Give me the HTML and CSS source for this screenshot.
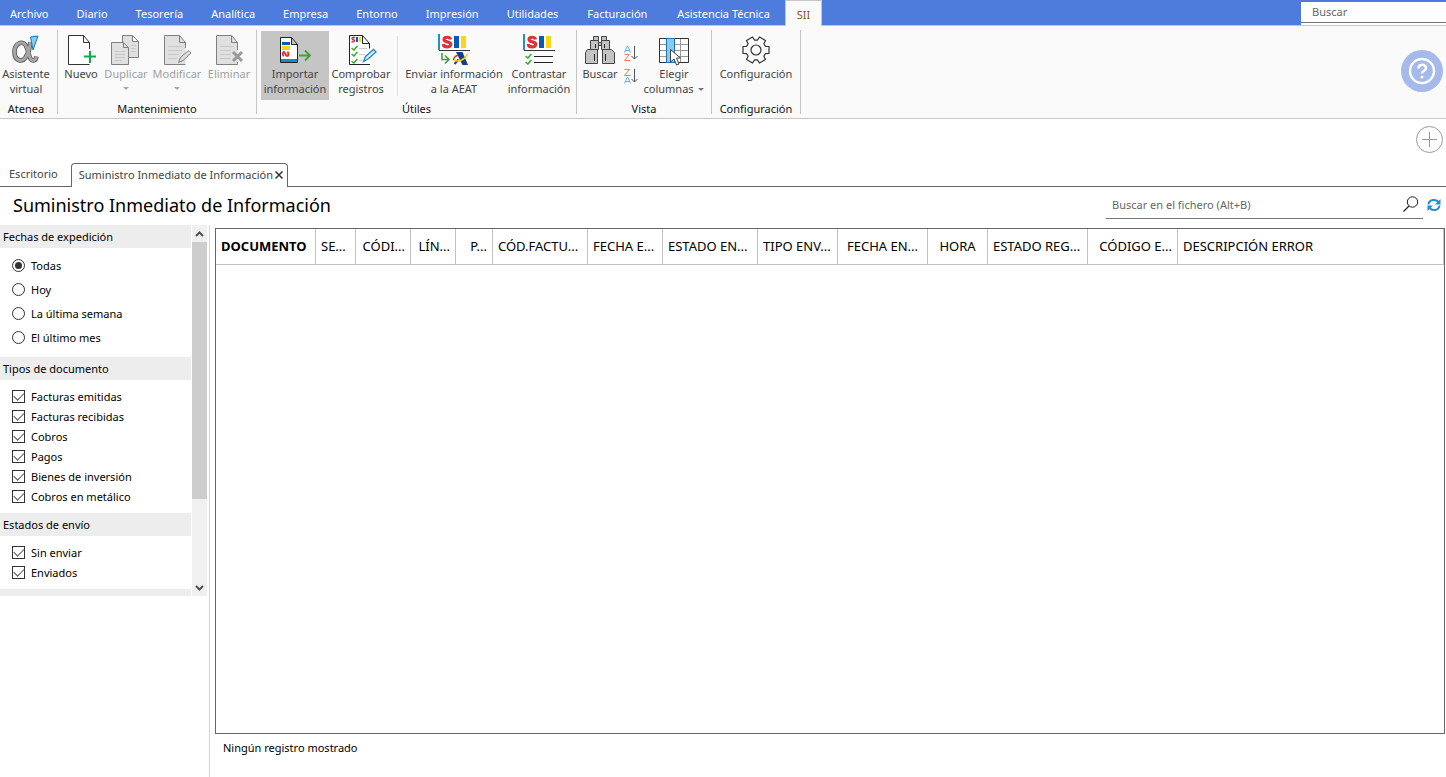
FILE: index.html
```html
<!DOCTYPE html>
<html lang="es">
<head>
<meta charset="utf-8">
<title>Suministro Inmediato de Información</title>
<link rel="stylesheet" href="styles.css">
</head>
<body>
<svg class="defs" aria-hidden="true">
  <symbol id="page" viewBox="0 0 32 32">
    <path d="M24.500 18V8.500l-6-7h-15v29h21M18.500 1.500v7h6" fill="#fff" stroke="#333"/>
  </symbol>
  <symbol id="sii" viewBox="0 0 32 17">
    <path d="M0 0h32v16H0z" fill="#fff"/><path d="M0 0h2v16H0z" fill="#2a8dcb"/>
    <path d="M12.500 5.500C12 2.500 6 2.500 6 5.500c0 3.200 6.800 1.500 6.800 5 0 3.200-7.300 3.200-7.600-.5" fill="none" stroke="#e0303a" stroke-width="3.200"/>
    <path d="M16 2h5v12h-5z" fill="#0a5ab0"/><path d="M23 2h5v12h-5z" fill="#ffd412"/>
    <path d="M1 16.500h31" stroke="#333"/>
  </symbol>
  <symbol id="check" viewBox="0 0 6 5">
    <path d="M.5 2.500l2 1.700L5.500.7" fill="none" stroke="#3ea535" stroke-width="1.300"/>
  </symbol>
</svg>

<header class="menubar">
  <nav class="menu">
    <button>Archivo</button><button>Diario</button><button>Tesorería</button><button>Analítica</button><button>Empresa</button><button>Entorno</button><button>Impresión</button><button>Utilidades</button><button>Facturación</button><button>Asistencia Técnica</button><button class="current">SII</button>
  </nav>
  <div class="menu-search">
    <input type="text" placeholder="Buscar" aria-label="Buscar">
  </div>
</header>

<div class="ribbon">
  <section class="group g-atenea">
    <div class="tools">
      <button class="tool">
        <svg viewBox="0 0 32 32"><g fill="none"><path d="M20.500 8c-1 9-3.500 13.500-5 15.500C12 28.500 4.500 27 4.500 18S12.500 6.500 15.500 11c3 4.500 3.500 15.500 7.500 15.500 2 0 3-1.500 3.500-4" stroke="#555" stroke-width="4.600"/><path d="M20.500 8c-1 9-3.500 13.500-5 15.500C12 28.500 4.500 27 4.500 18S12.500 6.500 15.500 11c3 4.500 3.500 15.500 7.500 15.500 2 0 3-1.500 3.500-4" stroke="#a6a6a6" stroke-width="3"/></g><path d="M20.500 3l7.500-1-5 14z" fill="#8ccbf0" stroke="#1b75b5"/></svg>
        <span>Asistente<br>virtual</span>
      </button>
    </div>
    <h2>Atenea</h2>
  </section>

  <section class="group g-mant">
    <div class="tools">
      <button class="tool w42">
        <svg viewBox="0 0 32 32"><use href="#page"/><path d="M25 15v14M18 22.500h14" stroke="#fafafa" stroke-width="5"/><path d="M25 17v12M19 22.500h12" stroke="#10a84c" stroke-width="2"/></svg>
        <span>Nuevo</span>
      </button>
      <button class="tool w48" disabled>
        <svg viewBox="0 0 32 32"><g fill="#e0e0e0" stroke="#808080"><path d="M12.500 1.500h10l6 6v16h-16zM22.500 1.500v6h6"/><path d="M1.500 8.500h12l5 5v17h-17zM13.500 8.500v5h5"/></g><path d="M5 17.500h10M5 20.500h10M5 23.500h10M5 26.500h7M21 11.500h5M21 14.500h5M21 17.500h5" stroke="#c8c8c8"/></svg>
        <span>Duplicar</span><i class="arrow"></i>
      </button>
      <button class="tool w54" disabled>
        <svg viewBox="0 0 32 32"><path d="M24.500 14V8.500l-6-7h-15v29h21M18.500 1.500v7h6" fill="#e0e0e0" stroke="#808080"/><path d="M7 12.500h14M7 16.500h14M7 20.500h11M7 24.500h9" stroke="#c8c8c8"/><path d="M17.500 28.500l2-5 8-7 2.500 2.500-8 7.500z" fill="#ddd" stroke="#808080"/></svg>
        <span>Modificar</span><i class="arrow"></i>
      </button>
      <button class="tool w50" disabled>
        <svg viewBox="0 0 32 32"><path d="M24.500 16V8.500l-6-7h-15v29h21V28M18.500 1.500v7h6" fill="#e0e0e0" stroke="#808080"/><path d="M7 12.500h14M7 16.500h11M7 20.500h11M7 24.500h11" stroke="#c8c8c8"/><path d="M20 18l9 9M29 18l-9 9" stroke="#999" stroke-width="3"/></svg>
        <span>Eliminar</span>
      </button>
    </div>
    <h2>Mantenimiento</h2>
  </section>

  <section class="group g-utiles">
    <div class="tools">
      <button class="tool w68 active">
        <svg viewBox="0 0 32 32"><path d="M1.500 3.500h11l6 7v18h-17zM12.500 3.500v7h6" fill="#fff" stroke="#222"/><path d="M2 25h16v3H2z" fill="#1d86c4"/><path d="M3 8h8v3H3z" fill="#0a5ab0"/><path d="M3 12h8v4H3z" fill="#ffd412"/><path d="M5 22c-1.700-1-1.500-4 0-4s1.300 4 3 4 2.200-3 .3-4" fill="none" stroke="#e0303a" stroke-width="2"/><path d="M20 21.500h11M26 16.500l5 5-5 5" fill="none" stroke="#3ea535" stroke-width="1.800"/></svg>
        <span>Importar<br>información</span>
      </button>
      <button class="tool w64">
        <svg viewBox="0 0 32 32"><path d="M25 30.500H4.500v-29h13l7 8v5M17.500 1.500v8h7" fill="#fff" stroke="#222"/><path d="M10 3.700c-2-.9-3.500.1-2.700 1.300s2.700 1 2.200 2-2 1-3 .5" fill="none" stroke="#e0303a" stroke-width="1.500"/><path d="M11 3h2v5h-2z" fill="#0a5ab0"/><path d="M14 3h2v5h-2z" fill="#ffd412"/><use href="#check" x="6" y="11" width="7" height="6"/><use href="#check" x="6" y="17" width="7" height="6"/><use href="#check" x="6" y="24" width="7" height="6"/><path d="M14 14.500h8M14 20.500h6M14 26.500h3" stroke="#ccc"/><path d="M18.500 27.500l2-5 8-7 2.500 2.500-8 7z" fill="#d6edfa" stroke="#2788c5" stroke-width="1.300"/></svg>
        <span>Comprobar<br>registros</span>
      </button>
      <div class="divider"></div>
      <button class="tool w104">
        <svg viewBox="0 0 32 32"><use href="#sii" width="32" height="17"/><path d="M4 19v6.500h6M7 21.500l4 4-4 4" fill="none" stroke="#3ea535" stroke-width="1.600"/><path d="M18 18h6.500L30 31h-5.500z" fill="#163c8c"/><path d="M16.500 30l4-4.500" stroke="#163c8c" stroke-width="2"/><path d="M20 21c-4 2-5 4-4 5" fill="none" stroke="#e0303a" stroke-width="1.500"/><path d="M16 26c4 2.500 11 0 13.500-6" fill="none" stroke="#ffc90e" stroke-width="1.600"/></svg>
        <span>Enviar información<br>a la AEAT</span>
      </button>
      <button class="tool w66">
        <svg viewBox="0 0 32 32"><use href="#sii" width="32" height="17"/><use href="#check" x="2" y="19" width="7" height="6"/><use href="#check" x="2" y="25" width="7" height="6"/><path d="M11 22.500h19M11 28.500h19" stroke="#222"/></svg>
        <span>Contrastar<br>información</span>
      </button>
    </div>
    <h2>Útiles</h2>
  </section>

  <section class="group g-vista">
    <div class="tools">
      <button class="tool w38">
        <svg viewBox="0 0 32 32"><g fill="#c4c4c4" stroke="#444"><path d="M9.500 2.500h5v4h-5zM17.500 2.500h5v4h-5z"/><path d="M14 8.500h4v3h-4z"/><path d="M6.500 6.500h8v9h-8zM17.500 6.500h8v9h-8z"/><path d="M1.500 29.500v-11l2-3h10v14zM18.500 29.500v-14h9l3 3v11z"/></g><path d="M11.500 10v4M20.500 10v4M10.500 20v7M21.500 20v7" stroke="#222"/></svg>
        <span>Buscar</span>
      </button>
      <div class="sorts">
        <button aria-label="Orden ascendente"><svg viewBox="0 0 16 17"><path d="M1.500 7.500l2.500-6h1l2.500 6M2.500 5.500h4" fill="none" stroke="#62afdd"/><path d="M1.500 9.500h5l-5 6h6" fill="none" stroke="#ee7478"/><path d="M11.500 1v13M8.500 11l3 3 3-3" fill="none" stroke="#555"/></svg></button>
        <button aria-label="Orden descendente"><svg viewBox="0 0 16 17"><path d="M1.500 1.500h5l-5 6h6" fill="none" stroke="#ee7478"/><path d="M1.500 15.500l2.500-6h1l2.500 6M2.500 13.500h4" fill="none" stroke="#62afdd"/><path d="M11.500 1v13M8.500 11l3 3 3-3" fill="none" stroke="#555"/></svg></button>
      </div>
      <button class="tool w66">
        <svg viewBox="0 0 32 32"><path d="M1.500 4.500h29v24h-29z" fill="#fff"/><path d="M22.500 4v25M1 10.500h30M1 16.500h30M1 22.500h30" stroke="#999"/><path d="M1.500 4.500h29v24h-29z" fill="none" stroke="#333"/><path d="M8.500 4.500h8v24h-8z" fill="#8cc9f2" stroke="#1b75b5"/><path d="M12.500 15.500v12.500l3.500-3 2.500 6 2.500-1-2.500-6h4z" fill="#fff" stroke="#444"/></svg>
        <span>Elegir<br>columnas <i class="arrow inline"></i></span>
      </button>
    </div>
    <h2>Vista</h2>
  </section>

  <section class="group g-config">
    <div class="tools">
      <button class="tool">
        <svg viewBox="0 0 32 32"><g fill="none" stroke="#333" stroke-width="1.200" stroke-linejoin="round"><path d="M25.300 12.300L29 12.500v7l-3.700.2-1.400 2.500 1.600 3.300-6 3.500-2.100-3.100h-2.800L12.500 29l-6-3.500 1.600-3.300-1.400-2.500-3.700-.2v-7l3.700-.2 1.400-2.500-1.600-3.300 6-3.500 2.100 3.100h2.800L19.500 3l6 3.500-1.600 3.300z"/><circle cx="16" cy="16" r="5"/></g></svg>
        <span>Configuración</span>
      </button>
    </div>
    <h2>Configuración</h2>
  </section>

  <button class="help" aria-label="Ayuda">
    <svg viewBox="0 0 42 42"><circle cx="21" cy="21" r="21" fill="#a5b9eb"/><g fill="none" stroke="#fff" stroke-width="2.400"><circle cx="21" cy="21" r="12"/><path d="M17.500 18.500c0-5 7.500-5 7.500-.5 0 3-4 2.500-4 5.500" stroke-width="2.600"/></g><circle cx="21" cy="27" r="1.500" fill="#fff"/></svg>
  </button>
</div>

<div class="shortcuts">
  <button aria-label="Añadir"><svg viewBox="0 0 27 27"><g fill="none" stroke="#999"><circle cx="13.500" cy="13.500" r="13"/><path d="M13.500 6v15M6 13.500h15"/></g></svg></button>
</div>

<div class="tabs">
  <button class="tab">Escritorio</button>
  <div class="tab open"><span>Suministro Inmediato de Información</span>
    <button aria-label="Cerrar"><svg viewBox="0 0 8 8"><path d="M.5.5l7 7M7.500.5l-7 7" stroke="#333" stroke-width="1.500"/></svg></button>
  </div>
  <div class="tab-rest"></div>
</div>

<div class="heading">
  <h1>Suministro Inmediato de Información</h1>
  <div class="file-search">
    <input type="text" placeholder="Buscar en el fichero (Alt+B)" aria-label="Buscar en el fichero">
    <button aria-label="Buscar"><svg viewBox="0 0 16 16"><circle cx="9.500" cy="6" r="5.200" fill="none" stroke="#222"/><path d="M6 10l-5.500 5.500" stroke="#222" stroke-width="1.200"/></svg></button>
  </div>
  <button class="refresh" aria-label="Actualizar"><svg viewBox="0 0 14 14"><path d="M1.500 6.500C2 1.500 8.500.5 11.500 4M12.500 7.500C12 12.500 5.500 13.500 2.500 10" fill="none" stroke="#2a8dcb" stroke-width="2"/><path d="M13.500 1v5.500H8zM.5 13V7.500H6z" fill="#2a8dcb"/></svg></button>
</div>

<main class="workspace">
  <aside class="sidebar">
    <div class="filters">
      <form class="filter-list">
        <h3>Fechas de expedición</h3>
        <div class="radios">
          <label><input type="radio" name="fecha" checked>Todas</label>
          <label><input type="radio" name="fecha">Hoy</label>
          <label><input type="radio" name="fecha">La última semana</label>
          <label><input type="radio" name="fecha">El último mes</label>
        </div>
        <h3>Tipos de documento</h3>
        <div class="checks">
          <label><input type="checkbox" checked>Facturas emitidas</label>
          <label><input type="checkbox" checked>Facturas recibidas</label>
          <label><input type="checkbox" checked>Cobros</label>
          <label><input type="checkbox" checked>Pagos</label>
          <label><input type="checkbox" checked>Bienes de inversión</label>
          <label><input type="checkbox" checked>Cobros en metálico</label>
        </div>
        <h3>Estados de envío</h3>
        <div class="checks">
          <label><input type="checkbox" checked>Sin enviar</label>
          <label><input type="checkbox" checked>Enviados</label>
        </div>
        <div class="next-section"></div>
      </form>
      <div class="scrollbar">
        <svg viewBox="0 0 9 6"><path d="M1 5l3.500-3.500L8 5" fill="none" stroke="#505050" stroke-width="2"/></svg>
        <div class="track"><div class="thumb"></div></div>
        <svg viewBox="0 0 9 6"><path d="M1 1l3.500 3.500L8 1" fill="none" stroke="#505050" stroke-width="2"/></svg>
      </div>
    </div>
  </aside>

  <section class="records">
    <div class="grid-box">
      <table>
        <colgroup><col class="c100"><col class="c40"><col class="c55"><col class="c45"><col class="c37"><col class="c95"><col class="c75"><col class="c95"><col class="c80"><col class="c90"><col class="c60"><col class="c100"><col class="c90"><col></colgroup>
        <thead>
          <tr>
            <th class="sorted">DOCUMENTO</th><th>SE...</th><th class="right">CÓDI...</th><th class="right">LÍN...</th><th class="right">P...</th><th>CÓD.FACTU...</th><th>FECHA E...</th><th>ESTADO EN...</th><th>TIPO ENV...</th><th class="center">FECHA EN...</th><th class="center">HORA</th><th>ESTADO REG...</th><th class="right">CÓDIGO E...</th><th>DESCRIPCIÓN ERROR</th>
          </tr>
        </thead>
      </table>
    </div>
    <p class="status">Ningún registro mostrado</p>
  </section>
</main>
</body>
</html>
```
FILE: styles.css
```css
* { box-sizing: border-box; }
html, body { height: 100%; }
body {
  margin: 0;
  display: flex;
  flex-direction: column;
  background: #fff;
  color: #000;
  font: 11px/15px "Noto Sans", "Open Sans", sans-serif;
}
button {
  margin: 0;
  padding: 0;
  border: 0;
  background: none;
  color: inherit;
  font: inherit;
}
svg { display: block; }
h1, h2, h3, p { margin: 0; font-weight: 400; }
.defs { display: none; }

/* Menu bar */
.menubar {
  display: flex;
  justify-content: space-between;
  flex: none;
  height: 26px;
  background: #4e7cdd;
  border-bottom: 1px solid #c6c6c6;
}
.menu { display: flex; }
.menu button {
  padding: 2px 14px 0;
  color: #fff;
  white-space: nowrap;
}
.menu button:first-child { padding-left: 10px; }
.menu button:nth-child(n+9) { padding-left: 15px; padding-right: 15px; }
.menu button.current {
  height: 26px;
  padding: 2px 11px 0;
  background: #fafafa;
  border: 1px solid #c6c6c6;
  border-bottom: 0;
  color: #7c5a10;
}
.menu-search {
  width: 145px;
  height: 23px;
  margin-top: 2px;
  background: #fff;
}
.menu-search input {
  display: block;
  width: 100%;
  height: 21px;
  padding: 0 11px 2px;
  border: 0;
  border-bottom: 1px solid #777;
  background: none;
  font: inherit;
}
input::placeholder { color: #666; opacity: 1; }

/* Ribbon */
.ribbon {
  display: flex;
  flex: none;
  height: 93px;
  padding-top: 4px;
  background: #fafafa;
  border-bottom: 1px solid #c6c6c6;
  color: #444;
}
.group {
  display: flex;
  flex-direction: column;
  height: 84px;
  border-right: 1px solid #c6c6c6;
}
.group h2 {
  flex: none;
  margin-top: 4px;
  color: #111;
  font-size: 11px;
  line-height: 10px;
  text-align: center;
}
.g-atenea { width: 58px; padding-right: 5px; }
.g-mant { width: 199px; }
.g-utiles { width: 320px; }
.g-vista { width: 135px; }
.g-config { width: 89px; }
.tools {
  display: flex;
  justify-content: center;
  flex: none;
  height: 69px;
  margin-top: 1px;
}
.tool {
  display: flex;
  flex-direction: column;
  align-items: center;
  padding-top: 3px;
  white-space: nowrap;
}
.tool svg { width: 32px; height: 32px; flex: none; }
.tool:disabled { color: #a0a0a0; }
.tool.active { background: #c5c5c5; }
.w38 { width: 38px; }
.w42 { width: 42px; }
.w48 { width: 48px; }
.w50 { width: 50px; }
.w54 { width: 54px; }
.w64 { width: 64px; }
.w66 { width: 66px; }
.w68 { width: 68px; }
.w104 { width: 104px; }
.divider { width: 1px; height: 60px; margin: 5px 4px; background: #ddd; }
.arrow {
  width: 0;
  margin-top: 6px;
  border: 3px solid transparent;
  border-top-color: #aaa;
  border-bottom: 0;
}
.arrow.inline {
  display: inline-block;
  margin: 0 0 2px 2px;
  border-top-color: #777;
}
.sorts { display: flex; flex-direction: column; gap: 6px; width: 22px; padding: 14px 2px 0 4px; }
.sorts svg { width: 16px; height: 17px; }
.help { align-self: center; margin: 0 3px 6px auto; }
.help svg { width: 42px; height: 42px; }

/* Shortcut strip */
.shortcuts {
  display: flex;
  justify-content: flex-end;
  flex: none;
  height: 44px;
  padding: 7px 3px;
}
.shortcuts button { height: 27px; }
.shortcuts svg { width: 27px; height: 27px; }

/* Document tabs */
.tabs { display: flex; flex: none; height: 24px; color: #444; }
.tab {
  padding: 0 13px 2px 9px;
  border-bottom: 1px solid #666;
  white-space: nowrap;
}
.tab.open {
  display: flex;
  align-items: center;
  gap: 2px;
  padding: 0 4px 2px 7px;
  border: 1px solid #666;
  border-bottom: 0;
  border-radius: 4px 4px 0 0;
}
.tab.open svg { width: 8px; height: 8px; }
.tab-rest { flex: 1; border-bottom: 1px solid #666; }

/* Heading */
.heading {
  display: flex;
  align-items: center;
  flex: none;
  height: 38px;
  padding: 0 5px 3px 13px;
}
.heading h1 { flex: 1; font-size: 18px; line-height: 26px; }
.file-search {
  display: flex;
  align-items: center;
  width: 317px;
  height: 28px;
  padding: 0 4px 0 6px;
  border-bottom: 1px solid #777;
}
.file-search input {
  flex: 1;
  min-width: 0;
  padding: 0;
  border: 0;
  font: inherit;
}
.file-search svg { width: 16px; height: 16px; }
.refresh { margin-left: 4px; }
.refresh svg { width: 14px; height: 14px; }

/* Workspace */
.workspace { display: flex; flex: 1; min-height: 0; }
.sidebar { flex: none; width: 210px; border-right: 1px solid #d4d4d4; }
.filters { display: flex; gap: 1px; }
.filter-list { flex: none; width: 191px; }
.filter-list h3 {
  padding-left: 3px;
  background: #ededed;
  font-size: 11px;
  line-height: 23px;
}
.radios { padding: 5px 12px 8px; }
.checks { padding: 6px 12px 7px; }
.filter-list label { display: flex; align-items: center; gap: 6px; height: 20px; }
.radios label { height: 24px; }
.filter-list input {
  appearance: none;
  display: grid;
  place-content: center;
  width: 13px;
  height: 13px;
  margin: 0;
  border: 1px solid #333;
  background: #fff;
}
.radios input { border-radius: 50%; }
.radios input:checked::before {
  content: "";
  width: 7px;
  height: 7px;
  border-radius: 50%;
  background: #333;
}
.checks input:checked::before {
  content: "";
  width: 9px;
  height: 5px;
  margin-bottom: 3px;
  border: solid #555;
  border-width: 0 0 1px 1px;
  transform: rotate(-45deg);
}
.next-section { height: 7px; background: #ededed; }
.scrollbar {
  display: flex;
  flex-direction: column;
  align-items: center;
  width: 15px;
  padding: 6px 0 5px;
  background: #f0f0f0;
}
.scrollbar svg { width: 9px; height: 6px; flex: none; }
.track { flex: 1; width: 100%; padding: 5px 0; }
.thumb { height: 76%; background: #cdcdcd; }

.records {
  display: flex;
  flex-direction: column;
  flex: 1;
  min-width: 0;
  padding: 3px 1px 0 5px;
}
.grid-box { flex: 1; border: 1px solid #666; }
.grid-box table { width: 100%; table-layout: fixed; border-collapse: separate; border-spacing: 0; }
.grid-box th {
  height: 36px;
  padding: 0 5px;
  border-right: 1px solid #c2c2c2;
  border-bottom: 1px solid #c2c2c2;
  font-size: 13px;
  font-weight: 400;
  text-align: left;
  white-space: nowrap;
}
.grid-box th.sorted { font-weight: 700; }
.grid-box th.right { text-align: right; }
.grid-box th.center { text-align: center; }
.c37 { width: 37px; }
.c40 { width: 40px; }
.c45 { width: 45px; }
.c55 { width: 55px; }
.c60 { width: 60px; }
.c75 { width: 75px; }
.c80 { width: 80px; }
.c90 { width: 90px; }
.c95 { width: 95px; }
.c100 { width: 100px; }
.status { flex: none; height: 43px; padding: 6px 8px; }
```
